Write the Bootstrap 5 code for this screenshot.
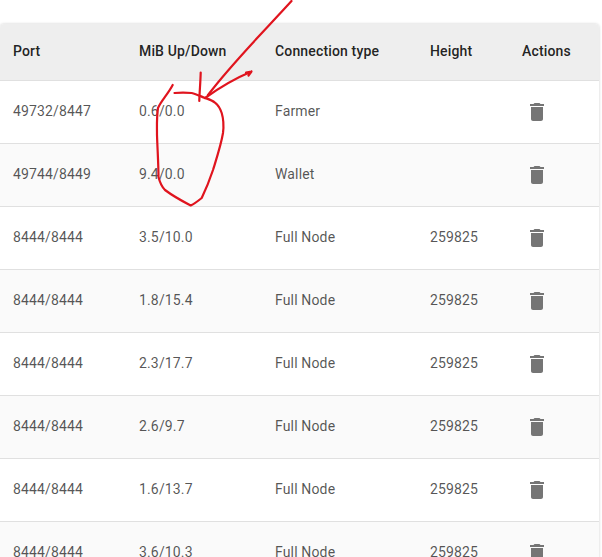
<!DOCTYPE html>
<html lang="en">
<head>
<meta charset="utf-8">
<title>Connections</title>
<link href="https://cdn.jsdelivr.net/npm/bootstrap@5.3.0/dist/css/bootstrap.min.css" rel="stylesheet">
<style>
html,body{height:557px;overflow:hidden;background:#fff}
body{font-family:Roboto,"Liberation Sans",sans-serif;font-size:14px}
.sheet{width:599px;margin-top:24px;border-radius:4px 4px 0 0;box-shadow:0 0 3px rgba(0,0,0,.2);overflow:hidden}
.conn-table{table-layout:fixed;width:599px;margin:0;--bs-table-bg:transparent}
.conn-table th,.conn-table td{padding:0 0 0 13px;vertical-align:middle;font-size:14px;letter-spacing:.15px}
.conn-table thead th{height:56px;background:#eeeeee;color:rgba(0,0,0,.87);font-weight:500;border-bottom:1px solid #e0e0e0}
.conn-table tbody td{height:63px;color:rgba(0,0,0,.68);font-weight:400;border-bottom:1px solid #e0e0e0}
.conn-table tbody tr:nth-child(even) td{background:#fafafa}
.conn-table .act-cell{padding-left:16px}
.bin{width:24px;height:24px;fill:#757575;display:block}
.scribble{position:absolute;left:0;top:0;width:602px;height:557px;pointer-events:none}
.scribble path{fill:none;stroke:#e0141e;stroke-width:2.2;stroke-linecap:round;stroke-linejoin:round}
</style>
</head>
<body class="position-relative">
<div class="sheet bg-white">
<table class="table conn-table">
<colgroup><col style="width:126px"><col style="width:136px"><col style="width:155px"><col style="width:92px"><col></colgroup>
<thead><tr><th>Port</th><th>MiB Up/Down</th><th>Connection type</th><th>Height</th><th>Actions</th></tr></thead>
<tbody>
<tr><td>49732/8447</td><td>0.6/0.0</td><td>Farmer</td><td></td><td class="act-cell"><svg class="bin" viewBox="0 0 24 24"><path d="M6 19c0 1.1.9 2 2 2h8c1.100 0 2-.9 2-2V7H6v12zM19 4h-3.500l-1-1h-5l-1 1H5v2h14V4z"/></svg></td></tr>
<tr><td>49744/8449</td><td>9.4/0.0</td><td>Wallet</td><td></td><td class="act-cell"><svg class="bin" viewBox="0 0 24 24"><path d="M6 19c0 1.1.9 2 2 2h8c1.100 0 2-.9 2-2V7H6v12zM19 4h-3.500l-1-1h-5l-1 1H5v2h14V4z"/></svg></td></tr>
<tr><td>8444/8444</td><td>3.5/10.0</td><td>Full Node</td><td>259825</td><td class="act-cell"><svg class="bin" viewBox="0 0 24 24"><path d="M6 19c0 1.1.9 2 2 2h8c1.100 0 2-.9 2-2V7H6v12zM19 4h-3.500l-1-1h-5l-1 1H5v2h14V4z"/></svg></td></tr>
<tr><td>8444/8444</td><td>1.8/15.4</td><td>Full Node</td><td>259825</td><td class="act-cell"><svg class="bin" viewBox="0 0 24 24"><path d="M6 19c0 1.1.9 2 2 2h8c1.100 0 2-.9 2-2V7H6v12zM19 4h-3.500l-1-1h-5l-1 1H5v2h14V4z"/></svg></td></tr>
<tr><td>8444/8444</td><td>2.3/17.7</td><td>Full Node</td><td>259825</td><td class="act-cell"><svg class="bin" viewBox="0 0 24 24"><path d="M6 19c0 1.1.9 2 2 2h8c1.100 0 2-.9 2-2V7H6v12zM19 4h-3.500l-1-1h-5l-1 1H5v2h14V4z"/></svg></td></tr>
<tr><td>8444/8444</td><td>2.6/9.7</td><td>Full Node</td><td>259825</td><td class="act-cell"><svg class="bin" viewBox="0 0 24 24"><path d="M6 19c0 1.1.9 2 2 2h8c1.100 0 2-.9 2-2V7H6v12zM19 4h-3.500l-1-1h-5l-1 1H5v2h14V4z"/></svg></td></tr>
<tr><td>8444/8444</td><td>1.6/13.7</td><td>Full Node</td><td>259825</td><td class="act-cell"><svg class="bin" viewBox="0 0 24 24"><path d="M6 19c0 1.1.9 2 2 2h8c1.100 0 2-.9 2-2V7H6v12zM19 4h-3.500l-1-1h-5l-1 1H5v2h14V4z"/></svg></td></tr>
<tr><td>8444/8444</td><td>3.6/10.3</td><td>Full Node</td><td>259825</td><td class="act-cell"><svg class="bin" viewBox="0 0 24 24"><path d="M6 19c0 1.1.9 2 2 2h8c1.100 0 2-.9 2-2V7H6v12zM19 4h-3.500l-1-1h-5l-1 1H5v2h14V4z"/></svg></td></tr>
</tbody>
</table>
</div>
<svg class="scribble" viewBox="0 0 602 557">
<path d="M291.500 1C268 27 232 63 208 95"/>
<path d="M251.500 71.500C236 78 219 88 205 98M251.500 71.500L246 72.500M251.500 71.500L248.500 75.500"/>
<path d="M200.700 72.500C200.500 82 199.500 92 199.300 101"/>
<path d="M172.700 85C168 94 161 101 158 108C156.500 118 157 125 157 135C157.500 150 158.500 165 158.500 177C160 183 162 187 165 190C173 196 182 201 190.700 205.500C194 204 198 201 201.700 198C206 189 210 179 213 170C217 157 221 145 223 133C224 125 223.500 119 221.700 113C220 108 218 105 215 102.700C212 100 208 99 205 98C200 96 196 94 191.700 93C186 92.500 180 92.500 174.500 93"/>
</svg>
<script src="https://cdn.jsdelivr.net/npm/bootstrap@5.3.0/dist/js/bootstrap.bundle.min.js"></script>
</body>
</html>
